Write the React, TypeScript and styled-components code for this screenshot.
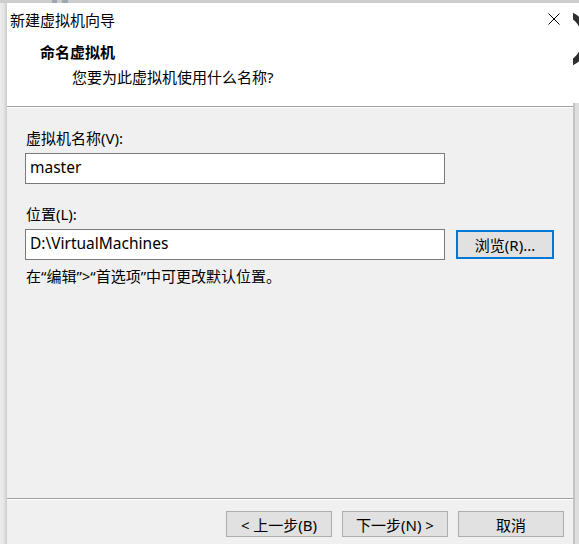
import React from "react"
import styled, { createGlobalStyle } from "styled-components"

const GlobalStyle = createGlobalStyle`
  html, body {
    margin: 0;
    padding: 0;
    background: #e9e9e9;
  }
  body {
    font-family: "Noto Sans", "Noto Sans CJK SC", sans-serif;
    font-size: 15px;
    color: #000;
  }
`

const Screen = styled.div`
  width: 579px;
  height: 544px;
  overflow: hidden;
  display: flex;
  flex-direction: column;
  background: #e9e9e9;
`

const TopStrip = styled.div`
  height: 3px;
  flex: none;
  background: #cdcdcd;
  display: flex;
  gap: 5px;
  padding-left: 52px;
`

const TopMark = styled.div<{ $w: number }>`
  width: ${(p) => p.$w}px;
  height: 3px;
  background: #9fa6b4;
`

const Row = styled.div`
  flex: 1;
  display: flex;
  min-height: 0;
`

const LeftShadow = styled.div`
  width: 6px;
  flex: none;
  background: linear-gradient(to right, #ececec 0%, #e6e6e6 60%, #d3d3d3 100%);
`

const RightEdge = styled.div`
  width: 6px;
  flex: none;
  display: flex;
  flex-direction: column;
  overflow: hidden;
  background: #f4f4f4;
`

const EdgeTop = styled.div`
  height: 100px;
  flex: none;
  overflow: hidden;
  background: #ffffff;
`

// fragment of a dark round mark belonging to the window behind
const EdgeArc = styled.div`
  width: 34px;
  height: 44px;
  margin: 8px 0 0 -31px;
  border: 6px solid #2f2f2f;
  border-radius: 50%;
`

const EdgeLower = styled.div`
  flex: 1;
  border-left: 2px solid #c4c4c4;
  background: #dedede;
`

const Dialog = styled.div`
  flex: 1;
  display: flex;
  flex-direction: column;
  background: #f0f0f0;
  border-left: 1px solid #d0d0d0;
  min-width: 0;
`

const TitleBar = styled.div`
  height: 32px;
  flex: none;
  display: flex;
  align-items: center;
  justify-content: space-between;
  padding: 0 13px 0 3px;
  background: #ffffff;
  font-size: 15px;
`

const CloseIcon = () => (
  <svg width="12" height="12" viewBox="0 0 12 12">
    <path d="M0.5 0.5 L11.5 11.5 M11.5 0.5 L0.5 11.5" stroke="#000" strokeWidth="1" fill="none" />
  </svg>
)

const Header = styled.div`
  height: 71px;
  flex: none;
  display: flex;
  flex-direction: column;
  gap: 5px;
  padding: 7px 0 0 33px;
  box-sizing: border-box;
  background: #ffffff;
`

const Heading = styled.div`
  font-weight: bold;
  line-height: 20px;
`

const SubHeading = styled.div`
  line-height: 20px;
  padding-left: 32px;
`

const Separator = styled.div`
  height: 1px;
  flex: none;
  background: #a0a0a0;
  border-bottom: 1px solid #ffffff;
`

const Body = styled.div`
  flex: 1;
  display: flex;
  flex-direction: column;
  padding: 20px 0 0 18px;
`

const Label = styled.div<{ $top?: number }>`
  line-height: 20px;
  margin-top: ${(p) => p.$top ?? 0}px;
  padding-left: 1px;
`

const FieldRow = styled.div`
  display: flex;
  align-items: center;
  gap: 11px;
  margin-top: 5px;
`

const TextBox = styled.div`
  width: 414px;
  height: 25px;
  border: 1px solid #7a7a7a;
  background: #ffffff;
  display: flex;
  align-items: center;
  padding: 0 0 4px 4px;
  box-sizing: content-box;
  line-height: 20px;
  font-size: 15.5px;
`

const Button = styled.button<{ $focused?: boolean; $w?: number }>`
  font-family: inherit;
  font-size: 15px;
  color: #000;
  width: ${(p) => p.$w ?? 106}px;
  height: ${(p) => (p.$focused ? 29 : 26)}px;
  margin: 0;
  padding: 0;
  background: #e1e1e1;
  border: ${(p) => (p.$focused ? "2px solid #0078d7" : "1px solid #adadad")};
  box-sizing: border-box;
  display: flex;
  align-items: center;
  justify-content: center;
  white-space: nowrap;
`

const Hint = styled.div`
  line-height: 20px;
  margin-top: 6px;
  padding-left: 1px;
`

const Footer = styled.div`
  height: 44px;
  flex: none;
  display: flex;
  justify-content: flex-end;
  align-items: flex-start;
  gap: 10px;
  padding: 11px 9px 0 0;
  box-sizing: border-box;
`

export default function App() {
  return (
    <Screen>
      <GlobalStyle />
      <TopStrip>
        <TopMark $w={5} />
        <TopMark $w={6} />
      </TopStrip>
      <Row>
        <LeftShadow />
        <Dialog>
          <TitleBar>
            <span>新建虚拟机向导</span>
            <CloseIcon />
          </TitleBar>
          <Header>
            <Heading>命名虚拟机</Heading>
            <SubHeading>您要为此虚拟机使用什么名称?</SubHeading>
          </Header>
          <Separator />
          <Body>
            <Label>虚拟机名称(V):</Label>
            <FieldRow>
              <TextBox>master</TextBox>
            </FieldRow>
            <Label $top={20}>位置(L):</Label>
            <FieldRow>
              <TextBox>D:\VirtualMachines</TextBox>
              <Button $focused $w={98}>浏览(R)...</Button>
            </FieldRow>
            <Hint>在“编辑”&gt;“首选项”中可更改默认位置。</Hint>
          </Body>
          <Separator />
          <Footer>
            <Button>&lt; 上一步(B)</Button>
            <Button>下一步(N) &gt;</Button>
            <Button>取消</Button>
          </Footer>
        </Dialog>
        <RightEdge>
          <EdgeTop>
            <EdgeArc />
          </EdgeTop>
          <EdgeLower />
        </RightEdge>
      </Row>
    </Screen>
  )
}
